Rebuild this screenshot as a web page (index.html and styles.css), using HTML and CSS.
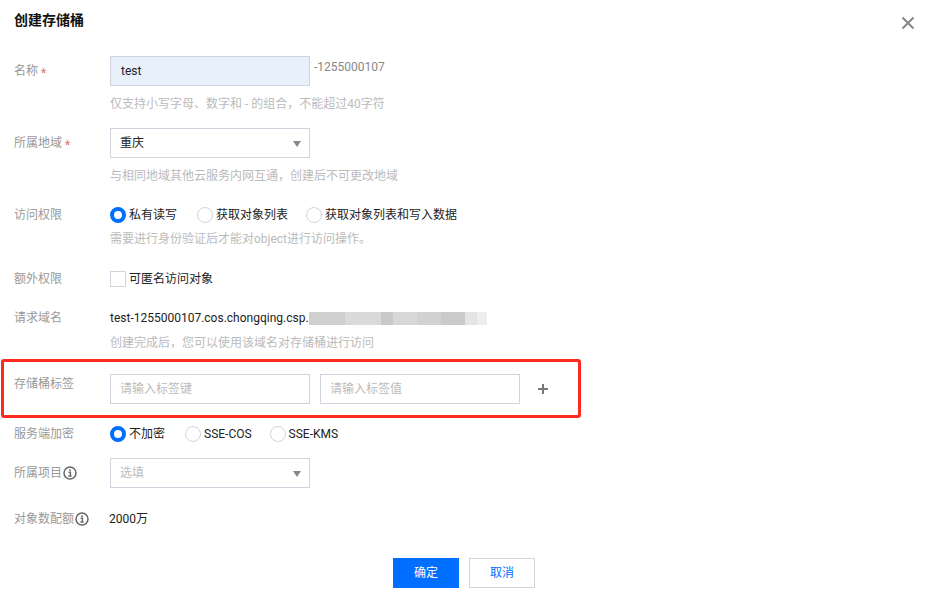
FILE: index.html
```html
<!DOCTYPE html>
<html lang="zh">
<head>
<meta charset="utf-8">
<title>创建存储桶</title>
<link rel="stylesheet" href="styles.css">
</head>
<body>
<div class="dialog">
  <header class="head">
    <h1 class="title">创建存储桶</h1>
    <svg class="close" width="14" height="14" viewBox="0 0 14 14"><path d="M1.5 1.5l11 11M12.5 1.5l-11 11" stroke="#888" stroke-width="2" fill="none"/></svg>
  </header>
  <form class="form">
    <div class="row r-name">
      <div class="label tall">名称<span class="req">*</span></div>
      <div class="field">
        <div class="inline">
          <div class="input filled">test</div>
          <span class="suffix">-1255000107</span>
        </div>
        <p class="help">仅支持小写字母、数字和 - 的组合，不能超过40字符</p>
      </div>
    </div>
    <div class="row r-region">
      <div class="label tall">所属地域<span class="req">*</span></div>
      <div class="field">
        <div class="input select">重庆<i class="caret"></i></div>
        <p class="help">与相同地域其他云服务内网互通，创建后不可更改地域</p>
      </div>
    </div>
    <div class="row r-access">
      <div class="label">访问权限</div>
      <div class="field">
        <div class="radios">
          <span class="radio"><i class="dot on"></i>私有读写</span>
          <span class="radio"><i class="dot"></i>获取对象列表</span>
          <span class="radio"><i class="dot"></i>获取对象列表和写入数据</span>
        </div>
        <p class="help tight">需要进行身份验证后才能对object进行访问操作。</p>
      </div>
    </div>
    <div class="row r-extra">
      <div class="label">额外权限</div>
      <div class="field"><span class="radio"><i class="box"></i>可匿名访问对象</span></div>
    </div>
    <div class="row r-domain">
      <div class="label">请求域名</div>
      <div class="field">
        <div class="value">test-1255000107.cos.chongqing.csp.<span class="mask"></span></div>
        <p class="help snug">创建完成后，您可以使用该域名对存储桶进行访问</p>
      </div>
    </div>
    <div class="row r-tags">
      <div class="label">存储桶标签</div>
      <div class="field tags">
        <div class="input ph">请输入标签键</div>
        <div class="input ph">请输入标签值</div>
        <svg class="plus" width="10" height="10" viewBox="0 0 10 10"><path d="M5 0v10M0 5h10" stroke="#777" stroke-width="2" fill="none"/></svg>
      </div>
    </div>
    <div class="row r-enc">
      <div class="label">服务端加密</div>
      <div class="field">
        <div class="radios">
          <span class="radio"><i class="dot on"></i>不加密</span>
          <span class="radio"><i class="dot"></i>SSE-COS</span>
          <span class="radio"><i class="dot"></i>SSE-KMS</span>
        </div>
      </div>
    </div>
    <div class="row r-project">
      <div class="label tall">所属项目<svg class="info" width="14" height="14" viewBox="0 0 14 14"><circle cx="7" cy="7" r="6" stroke="#666" stroke-width="1.5" fill="none"/><path d="M7 3.2v1.8M5.6 6.3H7.4v3.5M5.4 10h3.2" stroke="#666" stroke-width="1.4" fill="none"/></svg></div>
      <div class="field">
        <div class="input select ph">选填<i class="caret"></i></div>
      </div>
    </div>
    <div class="row r-quota">
      <div class="label">对象数配额<svg class="info" width="14" height="14" viewBox="0 0 14 14"><circle cx="7" cy="7" r="6" stroke="#666" stroke-width="1.5" fill="none"/><path d="M7 3.2v1.8M5.6 6.3H7.4v3.5M5.4 10h3.2" stroke="#666" stroke-width="1.4" fill="none"/></svg></div>
      <div class="field value quota">2000万</div>
    </div>
    <div class="actions">
      <button type="button" class="btn primary">确定</button>
      <button type="button" class="btn">取消</button>
    </div>
  </form>
</div>
</body>
</html>
```
FILE: styles.css
```css
*, *::after { box-sizing: border-box; }
html, body { margin: 0; padding: 0; background: #fff; }
body {
  width: 926px;
  height: 594px;
  overflow: hidden;
  font: 12px/18px Roboto, "Noto Sans CJK SC", sans-serif;
  color: #222;
}
.head {
  display: flex;
  justify-content: space-between;
  align-items: center;
  height: 20px;
  margin-top: 10px;
  padding: 0 11px 0 14px;
}
.title { margin: 0; font-size: 14px; line-height: 20px; font-weight: 700; color: #111; }
.close { margin-top: 6px; }
.form { display: flex; flex-direction: column; padding: 26px 0 0 14px; }
.row { display: flex; position: relative; }
.label { width: 96px; flex: none; color: #999; display: flex; align-items: flex-start; }
.label.tall { line-height: 31px; }
.req { color: #ee6a6a; margin: 2px 0 0 3px; }
.info { margin: 2px 0 0 1px; flex: none; }
.label.tall .info { margin-top: 8px; }
.field { flex: none; }
.inline { display: flex; }
.input {
  position: relative;
  width: 200px;
  height: 30px;
  border: 1px solid #cfd5de;
  padding: 0 9px;
  line-height: 29px;
  color: #222;
  background: #fff;
}
.input.filled { background: #e8f0fc; padding-left: 10px; }
.input.ph { color: #bbb; }
.suffix { margin-left: 4px; color: #888; line-height: 22px; }
.caret {
  position: absolute;
  right: 8px;
  top: 12px;
  width: 0;
  height: 0;
  border: 4.5px solid transparent;
  border-top: 6px solid #888;
  border-bottom: 0;
}
.help { margin: 9px 0 0; color: #bbb; }
.help.tight { margin-top: 6px; }
.help.snug { margin-top: 7px; }
.radios { display: flex; gap: 18px; }
.radios .radio:first-child { margin-right: 2px; }
.radio { display: flex; align-items: center; color: #222; }
.dot {
  width: 16px;
  height: 16px;
  margin-right: 3px;
  border: 1px solid #cfd5de;
  border-radius: 50%;
  background: #fff;
}
.dot.on { border: 4px solid #006eff; }
.box { width: 16px; height: 16px; margin-right: 3px; border: 1px solid #cfd5de; }
.value { color: #222; white-space: nowrap; }
.mask {
  display: inline-block;
  width: 178px;
  height: 13px;
  vertical-align: -3px;
  background: linear-gradient(90deg,
    #cfcfcf 0 36px, #dadada 36px 72px, #c9c9c9 72px 84px, #d8d8d8 84px 108px,
    #d2d2d2 108px 132px, #cacaca 132px 156px, #e4e4e4 156px 168px, #eeeeee 168px 178px);
}
.tags { display: flex; align-items: center; gap: 10px; }
.plus { margin-left: 8px; }
.r-name { margin-top: 0; }
.r-region { margin-top: 15px; }
.r-access { margin-top: 21px; }
.r-extra { margin-top: 22px; }
.r-domain { margin-top: 21px; }
.r-tags { margin-top: 22px; }
.r-tags > .label { margin-top: 1px; }
.r-tags::after {
  content: "";
  position: absolute;
  left: -13px;
  top: -15px;
  width: 580px;
  height: 59px;
  border: 3px solid #ff2a1f;
  border-radius: 3px;
  pointer-events: none;
}
.r-enc { margin-top: 21px; }
.r-project { margin-top: 15px; }
.r-project > .label { line-height: 30px; }
.r-quota { margin-top: 22px; }
.quota { margin-left: -1px; }
.actions { display: flex; justify-content: center; gap: 10px; margin: 30px 0 0 -12px; }
.btn {
  width: 66px;
  height: 30px;
  padding: 0;
  border: 1px solid #cfd5de;
  background: #fff;
  color: #006eff;
  font: inherit;
}
.btn.primary { background: #006eff; border-color: #006eff; color: #fff; }
```
